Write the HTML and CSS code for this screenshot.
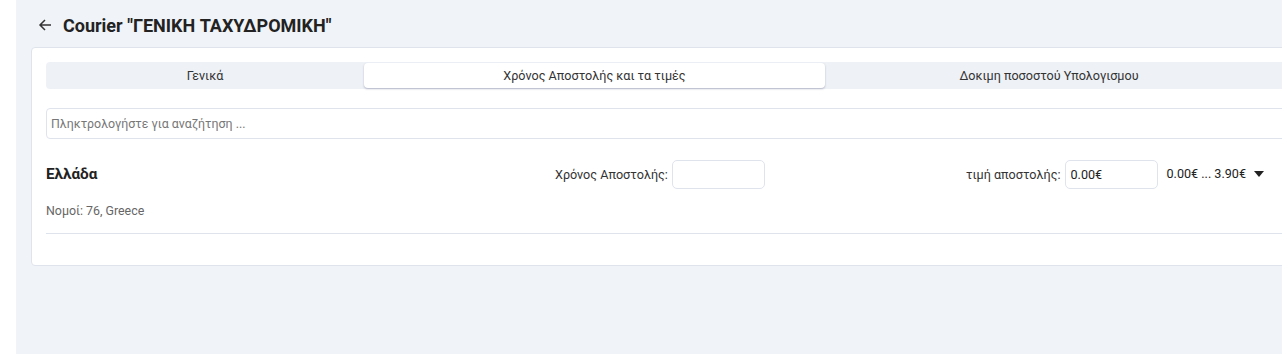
FILE: index.html
```html
<!DOCTYPE html>
<html>
<head>
    <meta name="viewport" content="width=device-width, initial-scale=1.0">
    <title>Courier</title>
    <link rel="stylesheet" href="styles.css">
</head>
<body>
    <div class="layout">
        <div class="sidebar"></div>

        <div class="content">
            <div class="pageHeader">
                <span class="backArrow">
                    <svg width="14" height="14" viewBox="0 0 14 14">
                        <path d="M13 7H2M7 2L2 7l5 5" fill="none" stroke="#333" stroke-width="1.5"/>
                    </svg>
                </span>
                <h1>Courier "ΓΕΝΙΚΗ ΤΑΧΥΔΡΟΜΙΚΗ"</h1>
            </div>

            <div class="card">
                <ul class="tabs">
                    <li class="tab tabGeneral">Γενικά</li>
                    <li class="tab tabPrices active">Χρόνος Αποστολής και τα τιμές</li>
                    <li class="tab tabTest">Δοκιμη ποσοστού Υπολογισμου</li>
                </ul>

                <input class="search" type="text" placeholder="Πληκτρολογήστε για αναζήτηση ...">

                <div class="zoneRow">
                    <div class="zoneInfo">
                        <h3>Ελλάδα</h3>
                        <p>Νομοί: 76, Greece</p>
                    </div>
                    <div class="field timeField">
                        <label>Χρόνος Αποστολής:</label>
                        <input type="text" value="">
                    </div>
                    <div class="field priceField">
                        <label>τιμή αποστολής:</label>
                        <input type="text" value="0.00€">
                    </div>
                    <div class="priceRange">0.00€ ... 3.90€ <span class="caret"></span></div>
                </div>
            </div>
        </div>
    </div>
</body>
</html>
```

FILE: styles.css
```css
html, body {
    margin: 0;
    padding: 0;
    font-family: Roboto, "Liberation Sans", sans-serif;
    color: #222;
    background-color: #fff;
    overflow: hidden;
}

.layout {
    display: flex;
    height: 354px;
}

.sidebar {
    width: 16px;
    flex: none;
    background-color: #fff;
}

.content {
    flex: none;
    width: 1300px;
    background-color: #f0f3f8;
    padding: 0 0 0 15px;
}

.pageHeader {
    display: flex;
    align-items: center;
    box-sizing: border-box;
    height: 47px;
    padding: 3px 0 0 7px;
}

.backArrow {
    display: flex;
    width: 25px;
}

.pageHeader h1 {
    margin: 0;
    font-size: 18px;
    font-weight: 700;
    color: #222;
}

.card {
    width: 1273px;
    background-color: #fff;
    border: 1px solid #dfe3ec;
    border-radius: 4px;
    padding: 14px 14px 31px 14px;
}

.tabs {
    display: flex;
    list-style: none;
    margin: 0;
    padding: 1px 0;
    background-color: #eef1f6;
    border-radius: 4px;
}

.tab {
    text-align: center;
    font-size: 12.6px;
    line-height: 25px;
    color: #333;
    border-radius: 4px;
}

.tabGeneral {
    width: 318px;
}

.tabPrices {
    width: 461px;
}

.tabTest {
    width: 448px;
}

.tab.active {
    background-color: #fff;
    box-shadow: 0 1px 2px rgba(60, 70, 110, 0.35);
}

.search {
    display: block;
    box-sizing: border-box;
    width: 100%;
    height: 31px;
    margin-top: 19px;
    padding: 0 4px;
    border: 1px solid #dfe3ec;
    border-radius: 4px;
    font-family: inherit;
    font-size: 12.4px;
    color: #333;
}

.search::placeholder {
    color: #777;
}

.zoneRow {
    display: flex;
    align-items: flex-start;
    margin-top: 21px;
    padding-bottom: 15px;
    border-bottom: 1px solid #dfe3ec;
}

.zoneInfo {
    flex: 1;
}

.zoneInfo h3 {
    margin: 0;
    font-size: 15.3px;
    font-weight: 700;
    line-height: 28px;
    color: #222;
}

.zoneInfo p {
    margin: 15px 0 0 0;
    font-size: 12.4px;
    color: #666;
}

.field {
    display: flex;
    align-items: center;
}

.field label {
    font-size: 12.6px;
    color: #333;
    margin-right: 4px;
}

.field input {
    box-sizing: border-box;
    width: 93px;
    height: 29px;
    border: 1px solid #dfe3ec;
    border-radius: 5px;
    padding: 0 5px;
    font-family: inherit;
    font-size: 12.6px;
    color: #222;
}

.timeField {
    margin-right: 201px;
}

.priceRange {
    display: flex;
    align-items: center;
    font-size: 12.6px;
    line-height: 28px;
    color: #222;
    margin-left: 9px;
    margin-right: 55px;
}

.caret {
    width: 0;
    height: 0;
    border-left: 5px solid transparent;
    border-right: 5px solid transparent;
    border-top: 6px solid #222;
    margin-left: 8px;
}
```
